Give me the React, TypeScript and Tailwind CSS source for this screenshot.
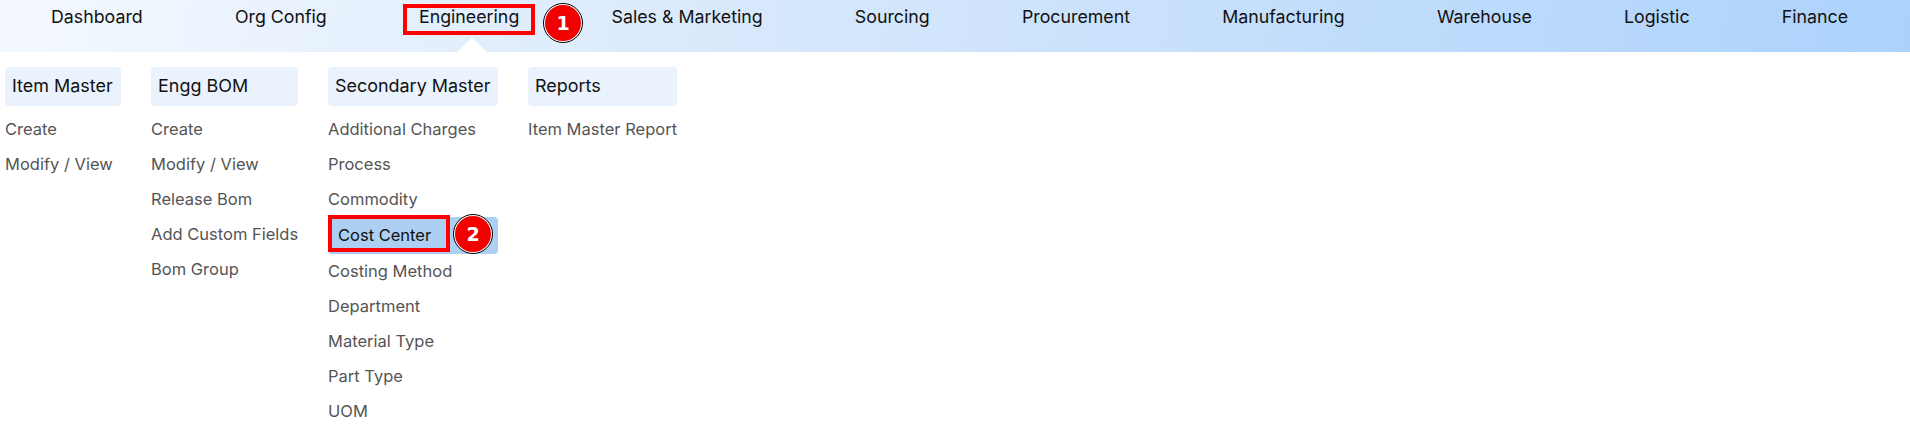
const nav = ["Dashboard","Org Config","Engineering","Sales & Marketing","Sourcing","Procurement","Manufacturing","Warehouse","Logistic","Finance"];

const cols = [
  { title: "Item Master", w: "w-[116px]", items: ["Create","Modify / View"] },
  { title: "Engg BOM", w: "w-[147px]", items: ["Create","Modify / View","Release Bom","Add Custom Fields","Bom Group"] },
  { title: "Secondary Master", w: "w-[170px]", items: ["Additional Charges","Process","Commodity","Cost Center","Costing Method","Department","Material Type","Part Type","UOM"] },
  { title: "Reports", w: "w-[149px]", items: ["Item Master Report"] },
];

function Badge({ n, className }: { n: string; className: string }) {
  return (
    <div className={"absolute flex h-[40px] w-[40px] items-center justify-center rounded-full border border-black bg-white p-[1px] " + className}>
      <div className="flex h-full w-full items-center justify-center rounded-full bg-[#f10000] text-[19px] font-bold leading-none text-white [font-family:'DejaVu_Sans',sans-serif]">{n}</div>
    </div>
  );
}

export default function App() {
  return (
    <div className="relative h-[427px] w-[1910px] overflow-hidden bg-white [font-family:Inter,sans-serif]">
      <nav className="relative flex h-[52px] gap-[92.2px] bg-[linear-gradient(100deg,#f4f9fe_0%,#dbeafc_35%,#acd2fb_100%)] pl-[51px] pt-[5px]">
        {nav.map((n) => (
          <span key={n} className="h-[24px] whitespace-nowrap text-[17.8px] leading-[24px] text-[#111]">{n}</span>
        ))}
        <div className="absolute bottom-0 left-[457px] h-0 w-0 border-x-[15px] border-b-[14px] border-x-transparent border-b-white" />
      </nav>
      <div className="flex gap-[30px] pl-[5px] pt-[15px]">
        {cols.map((c) => (
          <div key={c.title} className={c.w}>
            <div className="mb-[6px] flex h-[39px] items-center whitespace-nowrap rounded-[4px] bg-[#e9f2fd] pl-[7px] text-[17.95px] text-[#111]">{c.title}</div>
            <ul>
              {c.items.map((i) =>
                i === "Cost Center" ? (
                  <li key={i} className="flex h-[37px] items-center whitespace-nowrap rounded-[4px] bg-[#accff2] pl-[10px] text-[16.5px] text-[#111]">{i}</li>
                ) : (
                  <li key={i} className="flex h-[35px] items-center whitespace-nowrap text-[16.5px] text-[#555]">{i}</li>
                )
              )}
            </ul>
          </div>
        ))}
      </div>
      <div className="absolute left-[403px] top-[4px] h-[31px] w-[132px] border-[4px] border-[#ff0000]" />
      <div className="absolute left-[328px] top-[215px] h-[37px] w-[122px] border-[4px] border-[#ff0000]" />
      <Badge n="1" className="left-[543px] top-[3px]" />
      <Badge n="2" className="left-[453px] top-[214px]" />
    </div>
  );
}
